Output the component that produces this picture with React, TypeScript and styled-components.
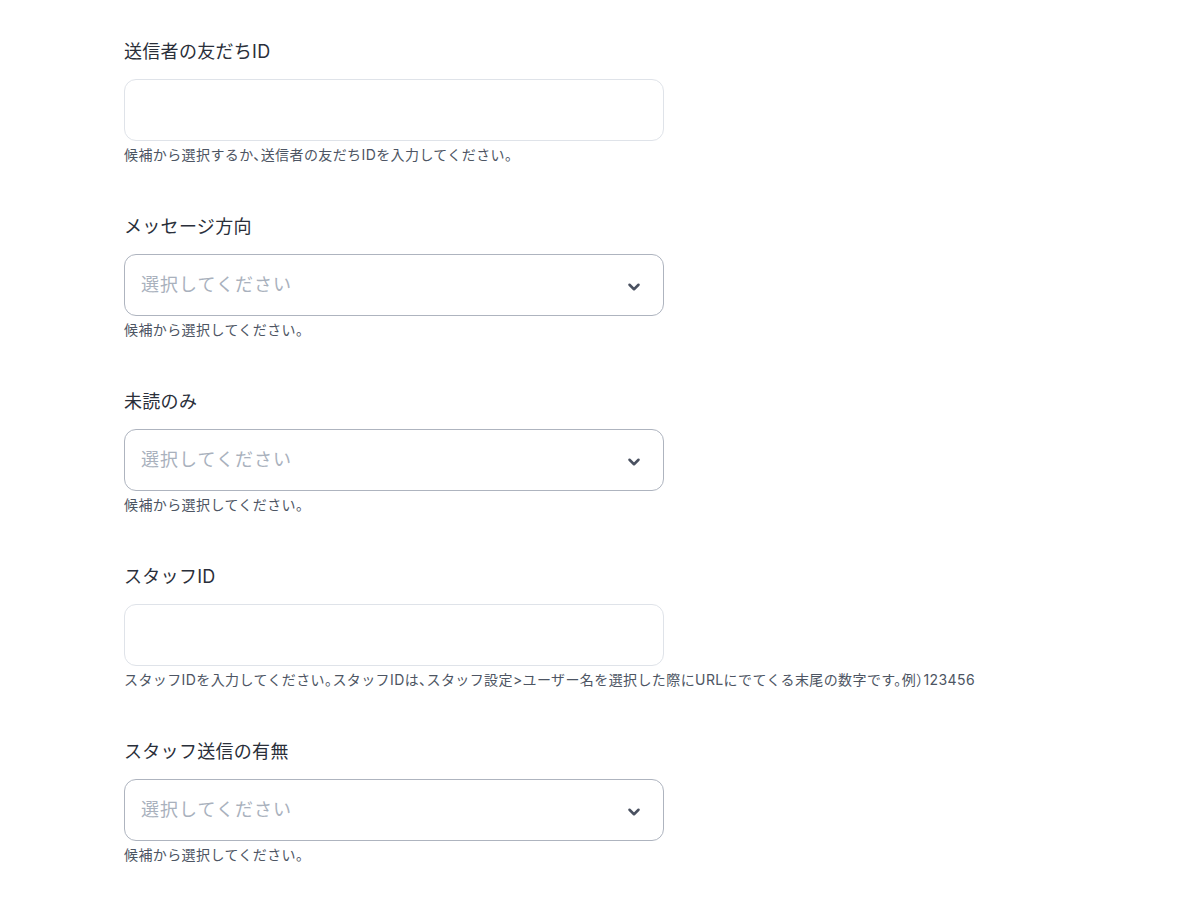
import React from 'react'
import styled, {createGlobalStyle} from 'styled-components'

const GlobalStyle = createGlobalStyle`
    body {
        margin: 0;
        background: #ffffff;
        font-family: Inter, 'Noto Sans CJK JP', sans-serif;
    }
`

const Form = styled.form`
    display: flex;
    flex-direction: column;
    gap: 48px;
    padding: 38px 0 40px 124px;
    width: 540px;
`

const Field = styled.div`
    display: flex;
    flex-direction: column;
`

const Label = styled.label`
    font-size: 18px;
    line-height: 28px;
    font-weight: 400;
    letter-spacing: 0.3px;
    color: #2a2f3a;
    margin-bottom: 13px;
`

const TextInput = styled.input`
    box-sizing: border-box;
    height: 62px;
    width: 100%;
    padding: 0 16px;
    border: 1px solid #dfe3e9;
    border-radius: 12px;
    font: inherit;
    font-size: 18px;
    color: #2d3748;
    outline: none;
`

const SelectBox = styled.div`
    box-sizing: border-box;
    height: 62px;
    display: flex;
    align-items: center;
    justify-content: space-between;
    padding: 0 20px 4px 16px;
    border: 1px solid #aeb4bf;
    border-radius: 12px;
    cursor: pointer;
`

const Placeholder = styled.span`
    font-size: 18px;
    letter-spacing: 1px;
    color: #a9b1bd;
`

const Chevron = styled.svg`
    width: 18px;
    height: 18px;
    margin-top: 8px;
    color: #4a5160;
`

const Help = styled.p`
    margin: 4px 0 0;
    font-size: 14px;
    line-height: 20px;
    letter-spacing: 0.4px;
    font-feature-settings: 'halt';
    color: #4d5563;
    white-space: nowrap;
`

type FieldDef = {label: string; kind: 'text' | 'select'; help: string}

const fields: FieldDef[] = [
    {
        label: '送信者の友だちID',
        kind: 'text',
        help: '候補から選択するか、送信者の友だちIDを入力してください。',
    },
    {label: 'メッセージ方向', kind: 'select', help: '候補から選択してください。'},
    {label: '未読のみ', kind: 'select', help: '候補から選択してください。'},
    {
        label: 'スタッフID',
        kind: 'text',
        help: 'スタッフIDを入力してください。スタッフIDは、スタッフ設定>ユーザー名を選択した際にURLにでてくる末尾の数字です。例）123456',
    },
    {label: 'スタッフ送信の有無', kind: 'select', help: '候補から選択してください。'},
]

const Select = () => (
    <SelectBox>
        <Placeholder>選択してください</Placeholder>
        <Chevron viewBox='0 0 24 24' fill='none' stroke='currentColor' strokeWidth={3.4} strokeLinecap='round' strokeLinejoin='round'>
            <path d='M6 9l6 6 6-6' />
        </Chevron>
    </SelectBox>
)

const App = () => (
    <>
        <GlobalStyle />
        <Form onSubmit={(e) => e.preventDefault()}>
            {fields.map((f) => (
                <Field key={f.label}>
                    <Label>{f.label}</Label>
                    {f.kind === 'text' ? <TextInput type='text' /> : <Select />}
                    <Help>{f.help}</Help>
                </Field>
            ))}
        </Form>
    </>
)

export default App
